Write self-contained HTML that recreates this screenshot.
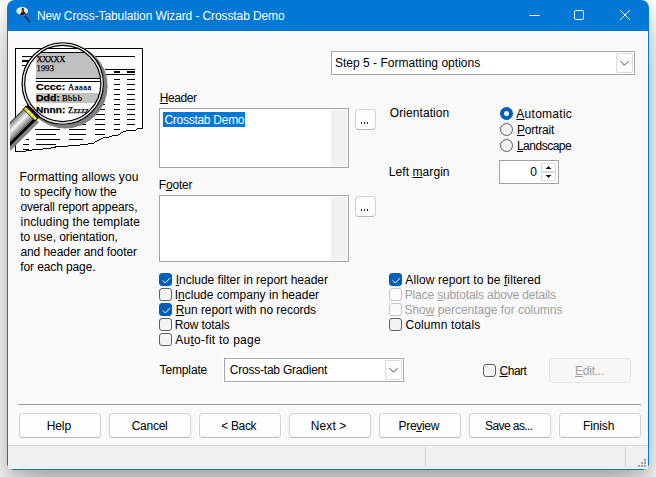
<!DOCTYPE html>
<html><head><meta charset="utf-8">
<style>
html,body{margin:0;padding:0;}
body{width:656px;height:477px;overflow:hidden;background:#fff;position:relative;font-family:"Liberation Sans",sans-serif;font-size:12px;color:#000;}
.abs{position:absolute;}
.t{position:absolute;white-space:nowrap;line-height:14px;height:14px;}
u{text-decoration:underline;text-underline-offset:1px;text-decoration-thickness:1px;}
#win{position:absolute;left:7px;top:0;width:642px;height:470px;background:#0078d4;border-radius:8px 8px 0 0;box-shadow:0 22px 36px -2px rgba(0,0,0,0.31),0 2px 12px 2px rgba(0,0,0,0.09);}
#client{position:absolute;left:8px;top:31px;width:640px;height:414px;background:#f9f9f9;box-sizing:border-box;border:1px solid #fffaf6;border-bottom:none;}
#status{position:absolute;left:8px;top:445px;width:640px;height:24px;background:#f0f0f0;border-top:1px solid #dadada;border-bottom:1px solid #fffaf6;box-sizing:border-box;}
.btn{position:absolute;box-sizing:border-box;border:1px solid #d2d2d2;border-bottom-color:#b9b9b9;border-radius:4px;background:#fdfdfd;}
.btn.dis{border-color:#e6e6e6;background:#f7f7f7;}
.edit{position:absolute;box-sizing:border-box;border:1px solid #a0a2aa;background:#fff;}
.combo{position:absolute;box-sizing:border-box;border:1px solid #a3a5ad;background:#fff;box-shadow:0 0 0 1px #fff;}
.cbtn{position:absolute;right:1px;top:1px;width:17px;height:20px;box-sizing:border-box;border:1px solid #dcdcdc;border-radius:2px;background:#fdfdfd;}
.cbtn svg{position:absolute;left:-1px;top:-1px}
.cb{position:absolute;box-sizing:border-box;width:13px;height:13px;border:1px solid #616161;border-radius:3px;background:#f3f3f3;}
.cb.on{background:#005fb8;border-color:#005fb8;}
.cb.dk{border-color:#5e5e5e;background:#eeeeee;}
.cb.dis{border-color:#c6c6c6;background:#fafafa;}
.rb{position:absolute;box-sizing:border-box;width:13px;height:13px;border:1px solid #5a5a5a;border-radius:50%;background:#f3f3f3;}
.rb.on{border:4px solid #005fb8;background:#fff;}
.track{position:absolute;background:#f0f0f0;}
</style></head><body>
<div id="win"></div>
<div id="client"></div>
<div id="status"></div>
<!-- corner cuts -->
<div class="abs" style="left:7px;top:465px;width:1px;height:5px;background:linear-gradient(#7ab0dc,#cfcfcf 60%)"></div>
<div class="abs" style="left:7px;top:469px;width:5px;height:1px;background:linear-gradient(90deg,#cfcfcf 40%,#7ab0dc)"></div>
<div class="abs" style="left:648px;top:465px;width:1px;height:5px;background:linear-gradient(#7ab0dc,#cfcfcf 60%)"></div>
<div class="abs" style="left:644px;top:469px;width:5px;height:1px;background:linear-gradient(270deg,#cfcfcf 40%,#7ab0dc)"></div>
<!-- status bar bits -->
<div class="abs" style="left:625px;top:447px;width:1px;height:20px;background:#d4d4d4"></div>
<div class="abs" style="left:425px;top:447px;width:1px;height:20px;background:#d4d4d4"></div>
<svg class="abs" style="left:636px;top:457px" width="12" height="12" viewBox="636 457 12 12" shape-rendering="crispEdges"><g fill="#a0a0a0"><rect x="644" y="459" width="2" height="2"/><rect x="641" y="462" width="2" height="2"/><rect x="644" y="462" width="2" height="2"/><rect x="638" y="465" width="2" height="2"/><rect x="641" y="465" width="2" height="2"/><rect x="644" y="465" width="2" height="2"/></g></svg>

<!-- title icon + buttons -->
<svg class="abs" style="left:12px;top:2px" width="24" height="24" viewBox="12 2 24 24">
 <ellipse cx="22.2" cy="10.9" rx="5.9" ry="3.9" fill="#e9f1f9"/>
 <path d="M21.7 9.2Q21.7 7.7 22.8 7.7Q23.9 7.7 23.9 9.2L23.8 10.6L24.7 12.2L26.2 13.5L25.6 14.6Q22.8 15.3 19.9 14.4L20.6 13.1L21.9 12L21.8 10.4Z" fill="#2a1a12"/>
 <ellipse cx="22.5" cy="10.7" rx="0.8" ry="1.3" fill="#86583a"/>
 <circle cx="24.3" cy="15" r="0.7" fill="#c8b090"/>
 <path d="M24.6 15.6L29.9 22.4" stroke="#0a0a0a" stroke-width="1.35" fill="none"/>
</svg>
<svg class="abs" style="left:520px;top:0" width="129" height="31" viewBox="0 0 129 31">
 <path d="M9.5 15.5h10" stroke="#fff" stroke-width="1" fill="none"/>
 <rect x="54.5" y="10.5" width="9" height="9" rx="1.2" stroke="#fff" stroke-width="1" fill="none"/>
 <path d="M100 10l10 10M110 10l-10 10" stroke="#fff" stroke-width="1" fill="none"/>
</svg>

<div class="combo" style="left:331px;top:51px;width:304px;height:24px"><div class="cbtn"><svg width="17" height="20" viewBox="0 0 17 20"><path d="M4.5 8.2L8.5 12.2L12.5 8.2" stroke="#4a4a4a" stroke-width="1" fill="none"/></svg></div></div>
<!--ILLUS--><svg class="abs" style="left:10px;top:40px" width="136" height="116" viewBox="10 40 136 116" shape-rendering="crispEdges">
 <defs>
  <clipPath id="lensclip"><circle cx="62.75" cy="83.5" r="38"/></clipPath>
  <clipPath id="imgclip"><rect x="10" y="40" width="136" height="116"/></clipPath>
  <linearGradient id="hg" x1="0" y1="8.5" x2="0" y2="-8.5" gradientUnits="userSpaceOnUse">
   <stop offset="0" stop-color="#000"/><stop offset="0.04" stop-color="#505050"/>
   <stop offset="0.08" stop-color="#888"/><stop offset="0.2" stop-color="#b4b4b4"/>
   <stop offset="0.33" stop-color="#e0e0e0"/><stop offset="0.41" stop-color="#f4f4f4"/><stop offset="0.5" stop-color="#d4d4d4"/>
   <stop offset="0.62" stop-color="#b0b0b0"/><stop offset="0.74" stop-color="#888"/>
   <stop offset="0.83" stop-color="#606060"/><stop offset="0.86" stop-color="#000"/><stop offset="1" stop-color="#000"/>
  </linearGradient>
 </defs>
 <!-- paper -->
 <path d="M15.5 48.5H142.5V128.5H137.5L135.5 130.5H127.5L124 131.5L120.5 133.5L117.5 135.5L112 136L107.5 137.5L103 138L100.5 139.5L96 141.5L94 143L88 144L80 145L72 145.5L65 146.5L55.5 147L49 148.5L43 149L36 149.5L28 150.5L24 151.5H15.5Z" fill="#fff" stroke="#000" stroke-width="1"/>
 <g stroke="#000" stroke-width="1" fill="none">
  <path d="M22 56.5H135"/>
  <path d="M22 60.5H60M22 61.5H60" />
  <path d="M22 65.5H60"/>
  <path d="M105 69.5H135M105 74.5H135"/>
  <path d="M114 71.5H120M114 72.5H120M127 71.5H135M127 72.5H135"/>
  <!-- dash columns A,B -->
  <path d="M114 79.5h6M127 79.5h8M114 84.5h6M127 84.5h8M114 89.5h6M127 89.5h8M114 94.5h6M127 94.5h8M114 99.5h6M127 99.5h8M114 104.5h6M127 104.5h8M114 109.5h6M127 109.5h8M114 114.5h6M127 114.5h8M114 119.5h6M127 119.5h8M114 124.5h6M127 124.5h8M114 129.5h6"/>
  <!-- col C -->
  <path d="M95 104.5h10M95 109.5h10M95 114.5h10M95 119.5h10M95 124.5h10M95 129.5h10M95 134.5h10"/>
  <!-- col D -->
  <path d="M69 124.5h17M69 129.5h17M69 134.5h17M69 139.5h14"/>
  <path d="M35 129.5h25M36 134.5h20M36 139.5h24M36 144.5h20"/>
  <path d="M26 139.5h3M23 144.5h6M23 149.5h6M20 119.5h4M20 124.5h3"/>
 </g>
 <!-- lens shadow -->
 <circle cx="65.3" cy="86.1" r="42.4" fill="#808080" shape-rendering="auto"/>
 <!-- lens body -->
 <circle cx="62.75" cy="83.5" r="41" fill="#fff" shape-rendering="auto"/>
 <g clip-path="url(#lensclip)">
  <rect x="20" y="40" width="90" height="90" fill="#fff"/>
  <path d="M20 48.5H110" stroke="#000"/>
  <path d="M20 52.5H110" stroke="#000"/>
  <rect x="36" y="53" width="70" height="25" fill="#c0c0c0"/>
  <path d="M36 78.5H110M36 81.5H110" stroke="#000"/>
  <rect x="36" y="93" width="70" height="10" fill="#c0c0c0"/>
  <g shape-rendering="auto" fill="#000" stroke="#000" stroke-width="0.25">
   <text x="36.5" y="61.8" font-family="Liberation Serif" font-size="8.5" textLength="28.8" lengthAdjust="spacing">XXXXX</text>
   <text x="36.5" y="71.2" font-family="Liberation Serif" font-size="8.5" textLength="17.5" lengthAdjust="spacing">1993</text>
   <text x="36" y="89.5" font-family="Liberation Sans" font-weight="bold" font-size="9" textLength="29.3" lengthAdjust="spacingAndGlyphs">Cccc:</text>
   <text x="68" y="89.5" font-family="Liberation Serif" font-size="8.5" textLength="23.3" lengthAdjust="spacing">Aaaaa</text>
   <text x="36" y="101.4" font-family="Liberation Sans" font-weight="bold" font-size="9" textLength="24" lengthAdjust="spacingAndGlyphs">Ddd:</text>
   <text x="61.9" y="101.4" font-family="Liberation Serif" font-size="8.5" textLength="20" lengthAdjust="spacing">Bbbb</text>
   <text x="36" y="113.3" font-family="Liberation Sans" font-weight="bold" font-size="9" textLength="29.3" lengthAdjust="spacingAndGlyphs">Nnnn:</text>
   <text x="68.1" y="113.3" font-family="Liberation Serif" font-size="8.5" textLength="20.8" lengthAdjust="spacing">Zzzzz</text>
  </g>
 </g>
 <circle cx="62.75" cy="83.5" r="40.6" fill="none" stroke="#000" stroke-width="1.4" shape-rendering="auto"/>
 <circle cx="62.75" cy="83.5" r="39.35" fill="none" stroke="#e0e0e0" stroke-width="1.3" shape-rendering="auto"/>
 <circle cx="62.75" cy="83.5" r="38.1" fill="none" stroke="#000" stroke-width="1.2" shape-rendering="auto"/>
 <!-- handle -->
 <g clip-path="url(#imgclip)" shape-rendering="auto">
  <g transform="translate(31.8 112.4) rotate(135)">
   <rect x="2" y="-12" width="40" height="4" fill="#808080"/>
   <rect x="-3" y="-8.5" width="4" height="17" fill="#000"/>
   <rect x="0" y="-8.5" width="45" height="17" fill="url(#hg)"/>
   <rect x="0" y="-8" width="3.6" height="16" fill="#e8d820"/>
   <rect x="0" y="-3" width="3.6" height="2.5" fill="#ffff80"/>
   <rect x="0" y="1.5" width="3.6" height="2.5" fill="#ffff80"/>
   <rect x="0" y="-8.5" width="3.6" height="17" fill="none" stroke="#000" stroke-width="0.8"/>
  </g>
 </g>
</svg>
<!--/ILLUS-->

<div class="edit" style="left:159px;top:108px;width:190px;height:60px;"></div>
<div class="track" style="left:331px;top:110px;width:16px;height:56px"></div>
<div class="abs" style="left:163px;top:112px;width:82px;height:15px;background:#0078d7"></div>
<div class="btn " style="left:355px;top:109px;width:21px;height:21px"></div>
<div class="abs" style="left:361px;top:122px;width:1.4px;height:2px;background:#222;box-shadow:3px 0 0 #222,6px 0 0 #222"></div>

<div class="edit" style="left:159px;top:195px;width:190px;height:67px;"></div>
<div class="track" style="left:331px;top:197px;width:16px;height:63px"></div>
<div class="btn " style="left:355px;top:196px;width:21px;height:21px"></div>
<div class="abs" style="left:361px;top:209px;width:1.4px;height:2px;background:#222;box-shadow:3px 0 0 #222,6px 0 0 #222"></div>

<div class="rb on" style="left:500px;top:107px"></div><div class="rb" style="left:500px;top:123px"></div><div class="rb" style="left:500px;top:139px"></div>

<div class="edit" style="left:499px;top:160px;width:60px;height:24px;"></div>
<div class="abs" style="left:541px;top:163px;width:15px;height:9px;box-sizing:border-box;border:1px solid #dcdcdc;background:#fdfdfd"></div>
<div class="abs" style="left:541px;top:172px;width:15px;height:9px;box-sizing:border-box;border:1px solid #dcdcdc;background:#fdfdfd"></div>
<svg class="abs" style="left:541px;top:163px" width="15" height="18" viewBox="0 0 15 18"><path d="M4.5 6L7.5 3L10.5 6Z" fill="#111"/><path d="M4.5 12L7.5 15L10.5 12Z" fill="#111"/></svg>

<div class="cb on" style="left:159px;top:273px"><svg width="13" height="13" viewBox="0 0 13 13" style="position:absolute;left:0;top:0"><path d="M3.1 6.8L5.3 9L9.8 4.3" stroke="#fff" stroke-width="1" fill="none" stroke-linecap="round" stroke-linejoin="round"/></svg></div><div class="cb " style="left:159px;top:288px"></div><div class="cb on" style="left:159px;top:303px"><svg width="13" height="13" viewBox="0 0 13 13" style="position:absolute;left:0;top:0"><path d="M3.1 6.8L5.3 9L9.8 4.3" stroke="#fff" stroke-width="1" fill="none" stroke-linecap="round" stroke-linejoin="round"/></svg></div><div class="cb " style="left:159px;top:318px"></div><div class="cb " style="left:159px;top:333px"></div>
<div class="cb on" style="left:389px;top:273px"><svg width="13" height="13" viewBox="0 0 13 13" style="position:absolute;left:0;top:0"><path d="M3.1 6.8L5.3 9L9.8 4.3" stroke="#fff" stroke-width="1" fill="none" stroke-linecap="round" stroke-linejoin="round"/></svg></div><div class="cb dis" style="left:389px;top:288px"></div><div class="cb dis" style="left:389px;top:303px"></div><div class="cb " style="left:389px;top:318px"></div>

<div class="combo" style="left:224px;top:358px;width:180px;height:24px"><div class="cbtn"><svg width="17" height="20" viewBox="0 0 17 20"><path d="M4.5 8.2L8.5 12.2L12.5 8.2" stroke="#4a4a4a" stroke-width="1" fill="none"/></svg></div></div>
<div class="cb " style="left:483px;top:364px"></div>
<div class="btn dis" style="left:549px;top:358px;width:82px;height:25px"></div>

<div class="abs" style="left:18px;top:404px;width:623px;height:1px;background:#a0a0a0"></div>
<div class="btn " style="left:19px;top:413px;width:82px;height:25px"></div><div class="btn " style="left:109px;top:413px;width:82px;height:25px"></div><div class="btn " style="left:199px;top:413px;width:82px;height:25px"></div><div class="btn " style="left:289px;top:413px;width:82px;height:25px"></div><div class="btn " style="left:379px;top:413px;width:82px;height:25px"></div><div class="btn " style="left:469px;top:413px;width:82px;height:25px"></div><div class="btn " style="left:559px;top:413px;width:82px;height:25px"></div>

<div class="t" style="left:36.9px;top:9px;letter-spacing:-0.102px;color:#fff;">New Cross-Tabulation Wizard - Crosstab Demo</div>
<div class="t" style="left:334.9px;top:56px;letter-spacing:0.023px;">Step 5 - Formatting options</div>
<div class="t" style="left:19.6px;top:170px;letter-spacing:0.105px;">Formatting allows you</div>
<div class="t" style="left:20.3px;top:185px;letter-spacing:0.024px;">to specify how the</div>
<div class="t" style="left:20.4px;top:200px;letter-spacing:-0.132px;">overall report appears,</div>
<div class="t" style="left:20.6px;top:215px;letter-spacing:0.119px;">including the template</div>
<div class="t" style="left:20.3px;top:230px;letter-spacing:-0.058px;">to use, orientation,</div>
<div class="t" style="left:20.4px;top:245px;letter-spacing:-0.07px;">and header and footer</div>
<div class="t" style="left:20.3px;top:260px;letter-spacing:-0.115px;">for each page.</div>
<div class="t" style="left:159.8px;top:91px;letter-spacing:-0.42px;"><u>H</u>eader</div>
<div class="t" style="left:164.4px;top:113px;letter-spacing:-0.267px;color:#fff;">Crosstab Demo</div>
<div class="t" style="left:158.8px;top:178px;letter-spacing:-0.18px;">F<u>o</u>oter</div>
<div class="t" style="left:389.8px;top:106px;letter-spacing:0.08px;">Orientation</div>
<div class="t" style="left:516.3px;top:107px;letter-spacing:0.275px;"><u>A</u>utomatic</div>
<div class="t" style="left:516.9px;top:123px;letter-spacing:-0.171px;"><u>P</u>ortrait</div>
<div class="t" style="left:516.9px;top:139px;letter-spacing:-0.487px;"><u>L</u>andscape</div>
<div class="t" style="left:388.8px;top:165px;letter-spacing:0.07px;">Left <u>m</u>argin</div>
<div class="t" style="left:530.2px;top:165px;">0</div>
<div class="t" style="left:175.7px;top:273px;letter-spacing:-0.017px;"><u>I</u>nclude filter in report header</div>
<div class="t" style="left:174.7px;top:288px;letter-spacing:0.013px;">I<u>n</u>clude company in header</div>
<div class="t" style="left:175.7px;top:303px;letter-spacing:-0.04px;"><u>R</u>un report with no records</div>
<div class="t" style="left:174.7px;top:318px;letter-spacing:-0.111px;">Row totals</div>
<div class="t" style="left:175.3px;top:333px;letter-spacing:0.26px;">Au<u>t</u>o-fit to page</div>
<div class="t" style="left:405.3px;top:273px;letter-spacing:0.1px;">Allow report to be <u>f</u>iltered</div>
<div class="t" style="left:404.7px;top:288px;letter-spacing:-0.143px;color:#a0a0a0;">Place <u>s</u>ubtotals above details</div>
<div class="t" style="left:404.5px;top:303px;letter-spacing:-0.031px;color:#a0a0a0;">Sho<u>w</u> percentage for columns</div>
<div class="t" style="left:405.5px;top:318px;letter-spacing:0.108px;">Column totals</div>
<div class="t" style="left:159.6px;top:363px;letter-spacing:-0.143px;">Template</div>
<div class="t" style="left:229.8px;top:363px;letter-spacing:-0.224px;">Cross-tab Gradient</div>
<div class="t" style="left:499.6px;top:364px;letter-spacing:-0.5px;"><u>C</u>hart</div>
<div class="t" style="left:575.1px;top:364px;letter-spacing:-0.25px;color:#a0a0a0;"><u>E</u>dit...</div>
<div class="t" style="left:46.7px;top:419px;letter-spacing:-0.1px;">Help</div>
<div class="t" style="left:131.7px;top:419px;letter-spacing:-0.26px;">Cancel</div>
<div class="t" style="left:221.3px;top:419px;letter-spacing:-0.36px;">&lt; Back</div>
<div class="t" style="left:310.8px;top:419px;letter-spacing:0.08px;">Next &gt;</div>
<div class="t" style="left:398.5px;top:419px;letter-spacing:-0.3px;">Pre<u>v</u>iew</div>
<div class="t" style="left:485.0px;top:419px;letter-spacing:-0.578px;">Save as...</div>
<div class="t" style="left:583.1px;top:419px;letter-spacing:-0.16px;">Finish</div>
</body></html>
